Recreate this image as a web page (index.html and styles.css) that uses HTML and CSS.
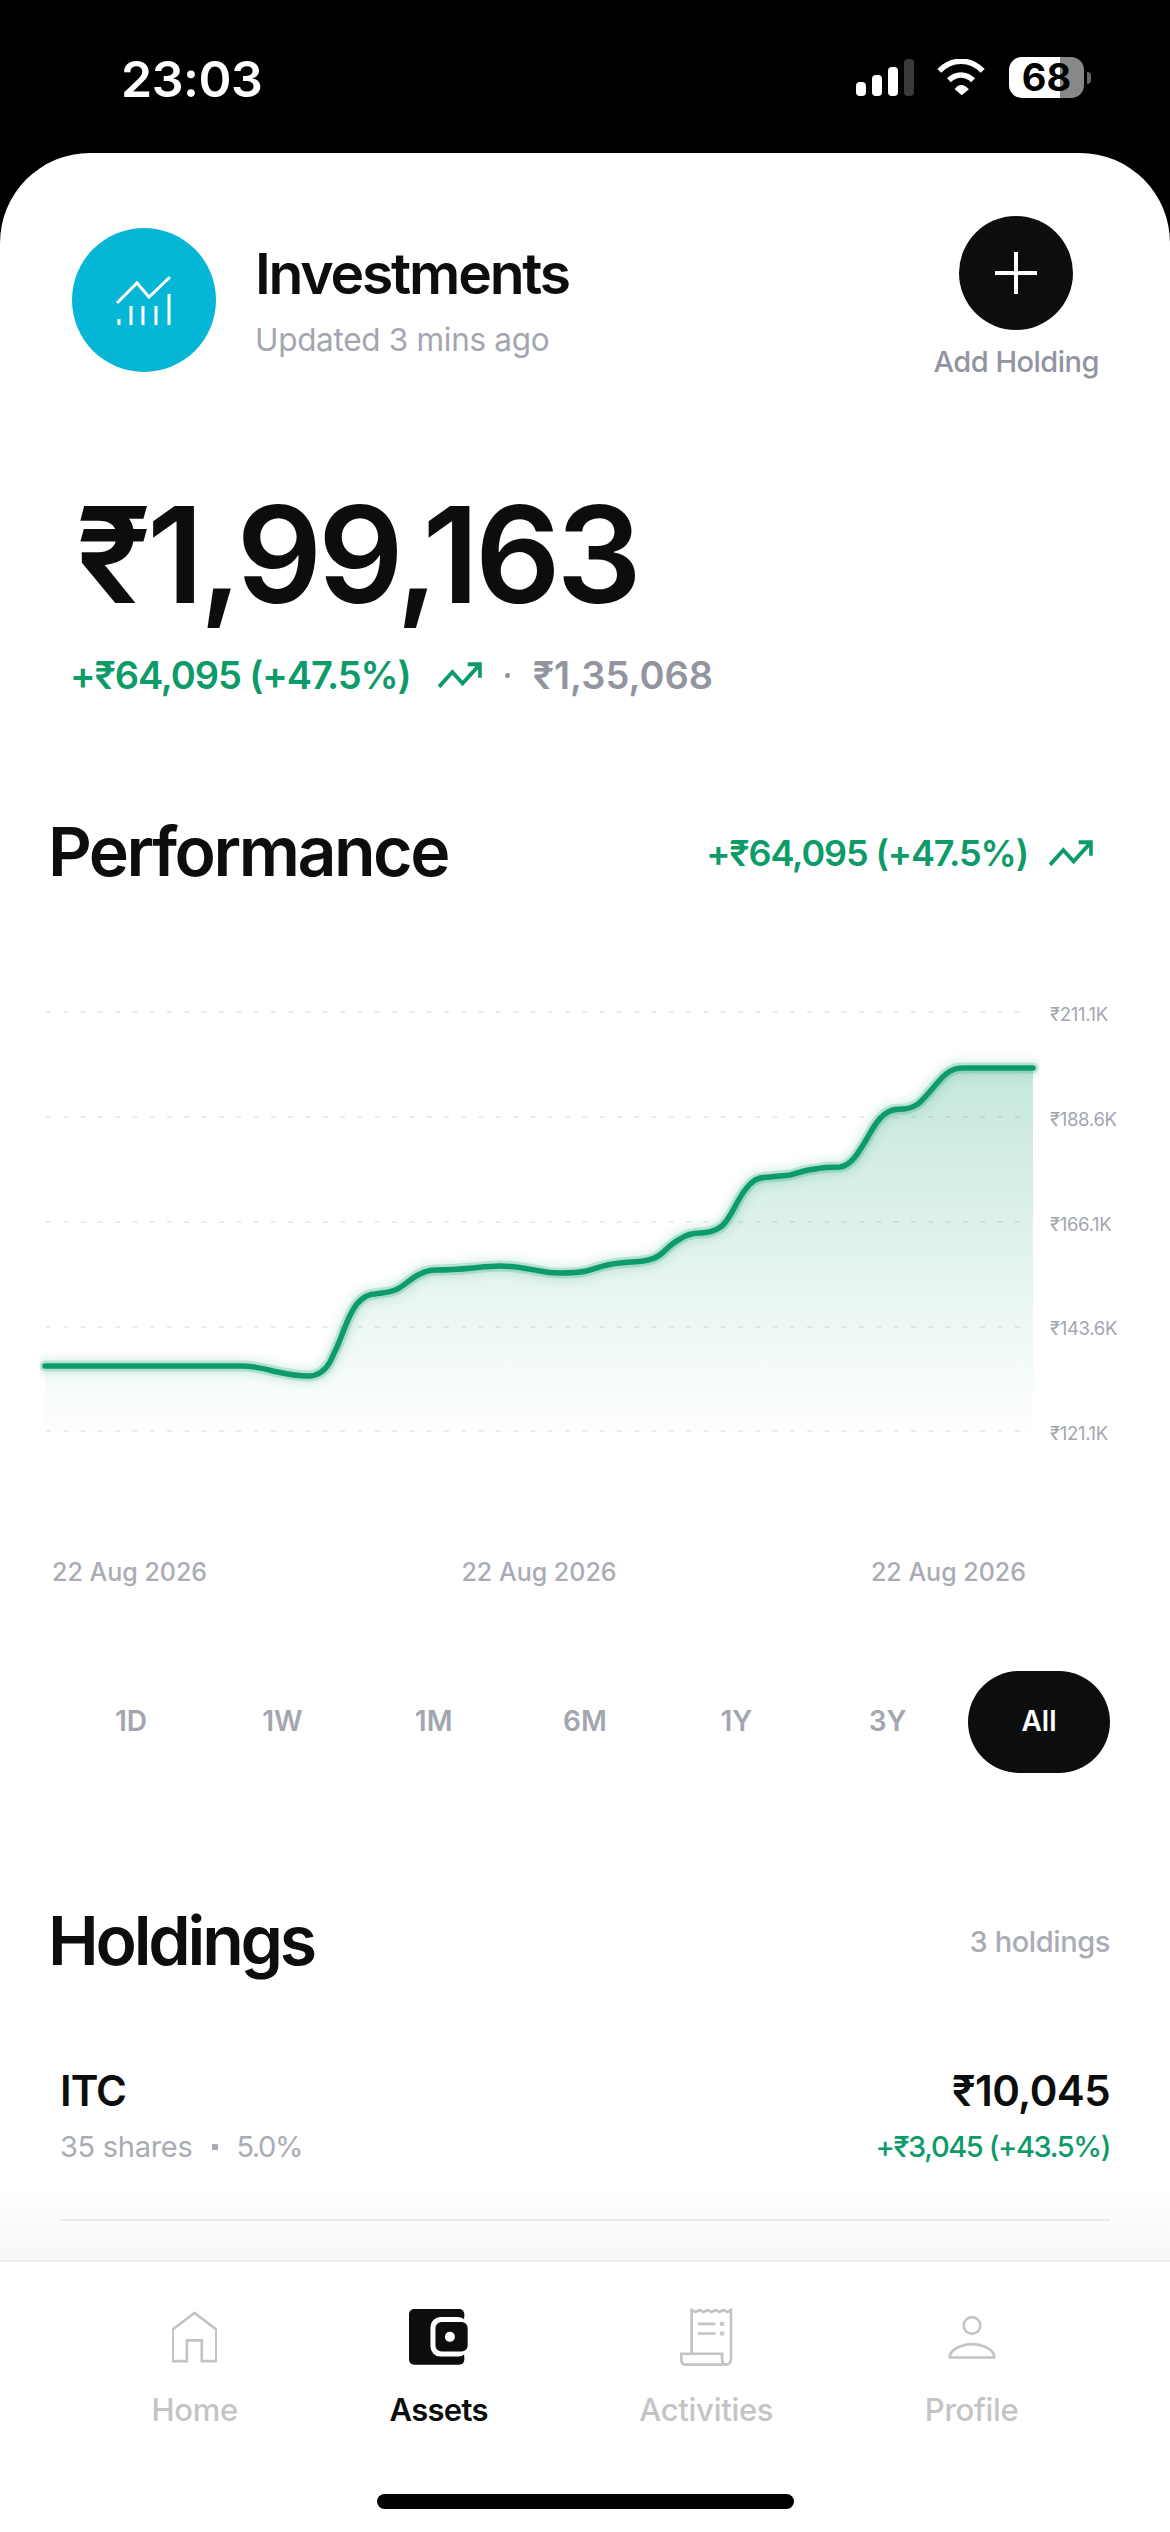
FILE: index.html
```html
<!DOCTYPE html>
<html lang="en">
<head>
<meta charset="utf-8">
<title>Investments</title>
<link rel="stylesheet" href="styles.css">
</head>
<body>
<div class="screen">
  <header class="status">
    <span class="clock">23:03</span>
    <div class="status-icons">
      <svg class="signal" viewBox="0 0 58 37"><rect x="0" y="23" width="10" height="14" rx="4" fill="#fff"/><rect x="16" y="16" width="10" height="21" rx="4" fill="#fff"/><rect x="32" y="8" width="10" height="29" rx="4" fill="#fff"/><rect x="48" y="0" width="10" height="37" rx="4" fill="#3a3a3a"/></svg>
      <svg class="wifi" viewBox="0 0 155 115"><path d="M10 37C48 -3 107 -3 145 37" fill="none" stroke="#fff" stroke-width="17"/><path d="M40 66C62 44 93 44 115 66" fill="none" stroke="#fff" stroke-width="17"/><path d="M58 94C68 76 87 76 102 94L80 113Z" fill="#fff"/></svg>
      <div class="battery"><span>68</span></div>
      <span class="battery-nub"></span>
    </div>
  </header>

  <div class="sheet">
    <main class="content">
      <section class="head">
        <div class="avatar">
          <svg viewBox="0 0 144 144" width="144" height="144" fill="none" stroke="#fff" stroke-width="3"><path d="M45 75 65 55 77 69 98 49"/><path d="M47 97V91M59 97V78M71 97V78M84 97V78M97 97V66"/></svg>
        </div>
        <div class="head-text">
          <h1 class="title">Investments</h1>
          <p class="updated">Updated 3 mins ago</p>
        </div>
        <div class="add">
          <div class="add-btn"><svg viewBox="0 0 42 42" width="42" height="42"><path d="M21 0V42M0 21H42" stroke="#fff" stroke-width="4"/></svg></div>
          <span class="add-label">Add Holding</span>
        </div>
      </section>

      <div class="amount">₹1,99,163</div>
      <div class="change-row">
        <span class="green">+₹64,095 (+47.5%)</span>
        <svg class="trend" viewBox="1 6 22 12" preserveAspectRatio="none"><path d="M22 7 13.5 15.5 8.5 10.5 2 17M16 7h6v6"/></svg>
        <span class="dot"></span>
        <span class="invested">₹1,35,068</span>
      </div>

      <section class="perf-head">
        <h2 class="section-title">Performance</h2>
        <div class="perf-change">
          <span class="green small">+₹64,095 (+47.5%)</span>
          <svg class="trend" viewBox="1 6 22 12" preserveAspectRatio="none"><path d="M22 7 13.5 15.5 8.5 10.5 2 17M16 7h6v6"/></svg>
        </div>
      </section>

      <section class="chart">
        <svg class="plot" viewBox="40 1000 1000 443" width="1000" height="443">
          <defs>
            <linearGradient id="area" x1="0" y1="1068" x2="0" y2="1440" gradientUnits="userSpaceOnUse">
              <stop offset="0" stop-color="#0d9b6a" stop-opacity=".24"/>
              <stop offset="1" stop-color="#0d9b6a" stop-opacity="0"/>
            </linearGradient>
            <path id="curve" d="M45 1366L240 1366C250 1366 262 1368 273 1371C282 1373 295 1376 308 1376C320 1376 326 1369 330 1362C335 1352 341 1338 345 1327C350 1314 355 1304 362 1299C366 1296 369 1294 375 1294C381 1293 388 1293 395 1290C403 1287 410 1279 418 1275C424 1272 428 1270 437 1270C450 1270 462 1269 473 1268C483 1267 491 1266 500 1266C516 1266 528 1269 540 1271C549 1273 553 1273 560 1273C570 1273 578 1273 586 1271C597 1268 606 1264 620 1263C628 1262 636 1262 643 1261C651 1260 656 1258 661 1254C667 1249 672 1243 680 1239C686 1235 692 1233 700 1233C708 1233 715 1231 722 1226C728 1221 733 1210 738 1201C744 1190 749 1184 755 1180C759 1178 762 1177 770 1177C778 1176 783 1176 790 1175C798 1173 805 1170 815 1169C824 1167 832 1167 840 1167C847 1166 851 1162 855 1157C862 1148 867 1138 873 1128C878 1120 882 1115 888 1112C893 1109 897 1109 903 1109C909 1109 913 1107 918 1104C925 1098 931 1090 938 1082C943 1076 949 1071 955 1069C958 1068 960 1068 965 1068L1033 1068"/>
          </defs>
          <g class="grid">
            <path d="M46 1012H1022M46 1117H1022M46 1222H1022M46 1327H1022M46 1431H1022"/>
          </g>
          <path fill="url(#area)" d="M45 1366L240 1366C250 1366 262 1368 273 1371C282 1373 295 1376 308 1376C320 1376 326 1369 330 1362C335 1352 341 1338 345 1327C350 1314 355 1304 362 1299C366 1296 369 1294 375 1294C381 1293 388 1293 395 1290C403 1287 410 1279 418 1275C424 1272 428 1270 437 1270C450 1270 462 1269 473 1268C483 1267 491 1266 500 1266C516 1266 528 1269 540 1271C549 1273 553 1273 560 1273C570 1273 578 1273 586 1271C597 1268 606 1264 620 1263C628 1262 636 1262 643 1261C651 1260 656 1258 661 1254C667 1249 672 1243 680 1239C686 1235 692 1233 700 1233C708 1233 715 1231 722 1226C728 1221 733 1210 738 1201C744 1190 749 1184 755 1180C759 1178 762 1177 770 1177C778 1176 783 1176 790 1175C798 1173 805 1170 815 1169C824 1167 832 1167 840 1167C847 1166 851 1162 855 1157C862 1148 867 1138 873 1128C878 1120 882 1115 888 1112C893 1109 897 1109 903 1109C909 1109 913 1107 918 1104C925 1098 931 1090 938 1082C943 1076 949 1071 955 1069C958 1068 960 1068 965 1068L1033 1068L1033 1440L45 1440Z"/>
          <use href="#curve" class="halo"/>
          <use href="#curve" class="glow"/>
          <use href="#curve" class="line"/>
        </svg>
        <div class="y-labels">
          <span>₹211.1K</span><span>₹188.6K</span><span>₹166.1K</span><span>₹143.6K</span><span>₹121.1K</span>
        </div>
      </section>

      <div class="dates"><span>22 Aug 2026</span><span>22 Aug 2026</span><span>22 Aug 2026</span></div>

      <nav class="ranges">
        <span class="range">1D</span><span class="range">1W</span><span class="range">1M</span><span class="range">6M</span><span class="range">1Y</span><span class="range">3Y</span><span class="range active">All</span>
      </nav>

      <section class="hold-head">
        <h2 class="section-title tight">Holdings</h2>
        <span class="hold-count">3 holdings</span>
      </section>

      <article class="holding">
        <div class="holding-top"><span class="ticker">ITC</span><span class="value">₹10,045</span></div>
        <div class="holding-sub">
          <div class="meta"><span>35 shares</span><span class="sq"></span><span class="pct">5.0%</span></div>
          <span class="gain">+₹3,045 (+43.5%)</span>
        </div>
      </article>
      <div class="divider"></div>
    </main>

    <footer class="tabbar">
      <div class="tabs">
        <div class="tab">
          <div class="tab-icon"><svg viewBox="115 215 136 156" width="45" height="52" class="outline"><path d="M117 366V270L183 220 249 270V366H205V303H160V366Z"/></svg></div>
          <span>Home</span>
        </div>
        <div class="tab active">
          <div class="tab-icon"><svg viewBox="0 0 176 167" width="59" height="56"><rect width="165" height="166" rx="15" fill="#0c0e0d"/><rect x="64" y="24" width="112" height="118" rx="30" fill="#fff"/><rect x="165" y="24" width="11" height="118" fill="#fff"/><rect x="79" y="39" width="96" height="88" rx="18" fill="#0c0e0d"/><circle cx="122" cy="83" r="15" fill="#fff"/></svg></div>
          <span>Assets</span>
        </div>
        <div class="tab">
          <div class="tab-icon"><svg viewBox="118 205 160 176" width="53" height="59" class="outline"><path d="M153 342V210L165 216 177 210 189 216 201 210 213 216 225 210 237 216 249 210 261 216 272 210V358Q272 375 255 375H137Q122 375 122 360V342H245V358Q245 372 255 375"/><path d="M172 252H225M172 281H225"/><circle cx="245" cy="252" r="3"/><circle cx="245" cy="281" r="3"/></svg></div>
          <span>Activities</span>
        </div>
        <div class="tab">
          <div class="tab-icon"><svg viewBox="930 225 144 134" width="48" height="45" class="outline"><circle cx="1002" cy="256" r="25"/><path d="M936 352V345C945 320 985 312 1002 312C1020 312 1060 320 1068 345V352Z"/></svg></div>
          <span>Profile</span>
        </div>
      </div>
      <div class="home-indicator"></div>
    </footer>
  </div>
</div>
</body>
</html>
```
FILE: styles.css
```css
* { box-sizing: border-box; }
html, body { margin: 0; padding: 0; background: #000; }
body { font-family: Inter, "Noto Sans", sans-serif; color: #0c0e0d; }
h1, h2, p { margin: 0; font-weight: inherit; }
.screen { width: 1170px; height: 2532px; display: flex; flex-direction: column; overflow: hidden; }

.status { height: 153px; flex: none; display: flex; justify-content: space-between; padding: 51px 79px 0 121px; color: #fff; }
.clock { font-size: 50px; font-weight: 600; line-height: 56px; letter-spacing: -0.5px; }
.status-icons { display: flex; align-items: flex-start; padding-top: 6px; }
.signal { width: 58px; height: 37px; margin-top: 2px; }
.wifi { width: 50px; height: 37px; margin-left: 22px; margin-top: 2px; }
.battery { width: 75px; height: 41px; margin-left: 23px; border-radius: 13px; background: linear-gradient(90deg, #fff 68%, #888 68%); color: #000; font-size: 38px; font-weight: 700; line-height: 41px; text-align: center; }
.battery-nub { width: 4px; height: 12px; margin: 15px 0 0 3px; border-radius: 0 4px 4px 0; background: #666; }

.sheet { flex: 1; display: flex; flex-direction: column; background: #fff; border-radius: 90px 90px 0 0; overflow: hidden; }
.content { position: relative; flex: 1; overflow: hidden; padding-top: 63px; }
.content::after { content: ""; position: absolute; left: 0; right: 0; bottom: 0; height: 70px; background: linear-gradient(#fff0, #f6f6f6); pointer-events: none; }

.head { display: flex; align-items: flex-start; padding: 0 71px 0 72px; }
.avatar { width: 144px; height: 144px; margin-top: 12px; border-radius: 50%; background: #06b6d6; flex: none; }
.avatar svg { display: block; }
.head-text { margin-left: 39px; margin-top: 26px; flex: 1; }
.title { font-size: 57px; font-weight: 600; line-height: 64px; letter-spacing: -2.2px; }
.updated { margin-top: 14px; font-size: 31.5px; line-height: 40px; color: #a3a6b0; letter-spacing: -0.3px; }
.add { display: flex; flex-direction: column; align-items: center; }
.add-btn { width: 114px; height: 114px; border-radius: 50%; background: #0c0e0d; display: flex; align-items: center; justify-content: center; }
.add-label { margin-top: 14px; font-size: 29px; font-weight: 500; line-height: 36px; color: #92959f; letter-spacing: -0.5px; }

.amount { margin-top: 104px; padding-left: 76px; font-size: 134px; font-weight: 600; line-height: 140px; letter-spacing: -4.2px; }
.change-row { margin-top: 28px; padding-left: 70px; display: flex; align-items: center; height: 46px; }
.green { color: #0d9b6a; font-size: 38px; font-weight: 600; letter-spacing: -1.1px; }
.green.small { font-size: 36px; }
.trend { width: 45px; height: 27px; margin-left: 26px; fill: none; stroke: #0d9b6a; stroke-width: 1.8; }
.dot { width: 5px; height: 5px; margin-left: 23px; border-radius: 50%; background: #92959f; }
.invested { margin-left: 23px; font-size: 38px; font-weight: 600; color: #92959f; letter-spacing: 0; }

.perf-head { margin-top: 113px; padding: 0 77px 0 48px; display: flex; justify-content: space-between; align-items: center; }
.section-title { font-size: 68px; font-weight: 600; line-height: 80px; letter-spacing: -2.5px; }
.section-title.tight { letter-spacing: -3.2px; }
.perf-change { display: flex; align-items: center; margin-top: 4px; }
.perf-change .trend { margin-left: 20px; }

.chart { margin-top: 109px; margin-left: 40px; display: flex; height: 443px; }
.plot { display: block; flex: none; }
.grid path { fill: none; stroke: #ebebeb; stroke-width: 2; stroke-dasharray: 5 12.3; }
.halo { fill: none; stroke: #0d9b6a; stroke-opacity: .14; stroke-width: 16; stroke-linecap: round; filter: blur(4px); }
.glow { fill: none; stroke: #0d9b6a; stroke-opacity: .2; stroke-width: 11; stroke-linejoin: round; stroke-linecap: round; }
.line { fill: none; stroke: #0d9b6a; stroke-width: 5.5; stroke-linejoin: round; stroke-linecap: round; }
.y-labels { margin-left: 10px; margin-top: 2px; height: 443px; flex: none; display: flex; flex-direction: column; justify-content: space-between; font-size: 18.5px; line-height: 24px; color: #a3a6b0; letter-spacing: -0.3px; }

.dates { margin-top: 113px; padding: 0 144px 0 52px; display: flex; justify-content: space-between; font-size: 25px; font-weight: 500; line-height: 32px; color: #a9acb5; }

.ranges { margin-top: 83px; padding: 0 60px; display: flex; justify-content: space-between; }
.range { width: 142px; height: 102px; padding-bottom: 2px; border-radius: 51px; display: flex; align-items: center; justify-content: center; font-size: 28px; font-weight: 600; color: #a3a6b0; }
.range.active { background: #0c0e0d; color: #fff; }

.hold-head { margin-top: 127px; padding: 0 60px 0 48px; display: flex; justify-content: space-between; align-items: center; }
.hold-count { margin-top: 3px; font-size: 29px; font-weight: 500; color: #a9acb5; letter-spacing: -0.4px; }

.holding { margin-top: 86px; padding: 0 60px; }
.holding-top, .holding-sub { display: flex; justify-content: space-between; align-items: center; }
.holding-top { font-size: 42px; font-weight: 600; line-height: 50px; letter-spacing: -1px; }
.value { letter-spacing: -0.6px; }
.holding-sub { margin-top: 13px; font-size: 29px; line-height: 36px; }
.meta { display: flex; align-items: center; color: #a9acb5; letter-spacing: -0.3px; }
.sq { width: 6px; height: 6px; margin: 0 18px 0 20px; background: #a9acb5; }
.pct { letter-spacing: -1.4px; }
.gain { color: #0d9b6a; font-weight: 500; letter-spacing: -1.4px; }
.divider { position: relative; z-index: 1; margin: 54px 60px 0; height: 2px; background: #ececec; }

.tabbar { flex: none; height: 272px; border-top: 2px solid #efefef; padding-top: 45px; display: flex; flex-direction: column; background: #fff; }
.tabs { display: flex; justify-content: space-evenly; }
.tab { display: flex; flex-direction: column; align-items: center; font-size: 31px; font-weight: 500; line-height: 38px; color: #c4c4c4; letter-spacing: -0.3px; }
.tab.active { color: #0c0e0d; font-weight: 600; letter-spacing: -0.7px; }
.tab-icon { height: 60px; margin-bottom: 24px; display: flex; align-items: center; justify-content: center; }
.outline { fill: none; stroke: #c4c4c4; stroke-width: 8; }
.home-indicator { width: 417px; height: 15px; margin: 65px auto 0; border-radius: 8px; background: #000; }
```
